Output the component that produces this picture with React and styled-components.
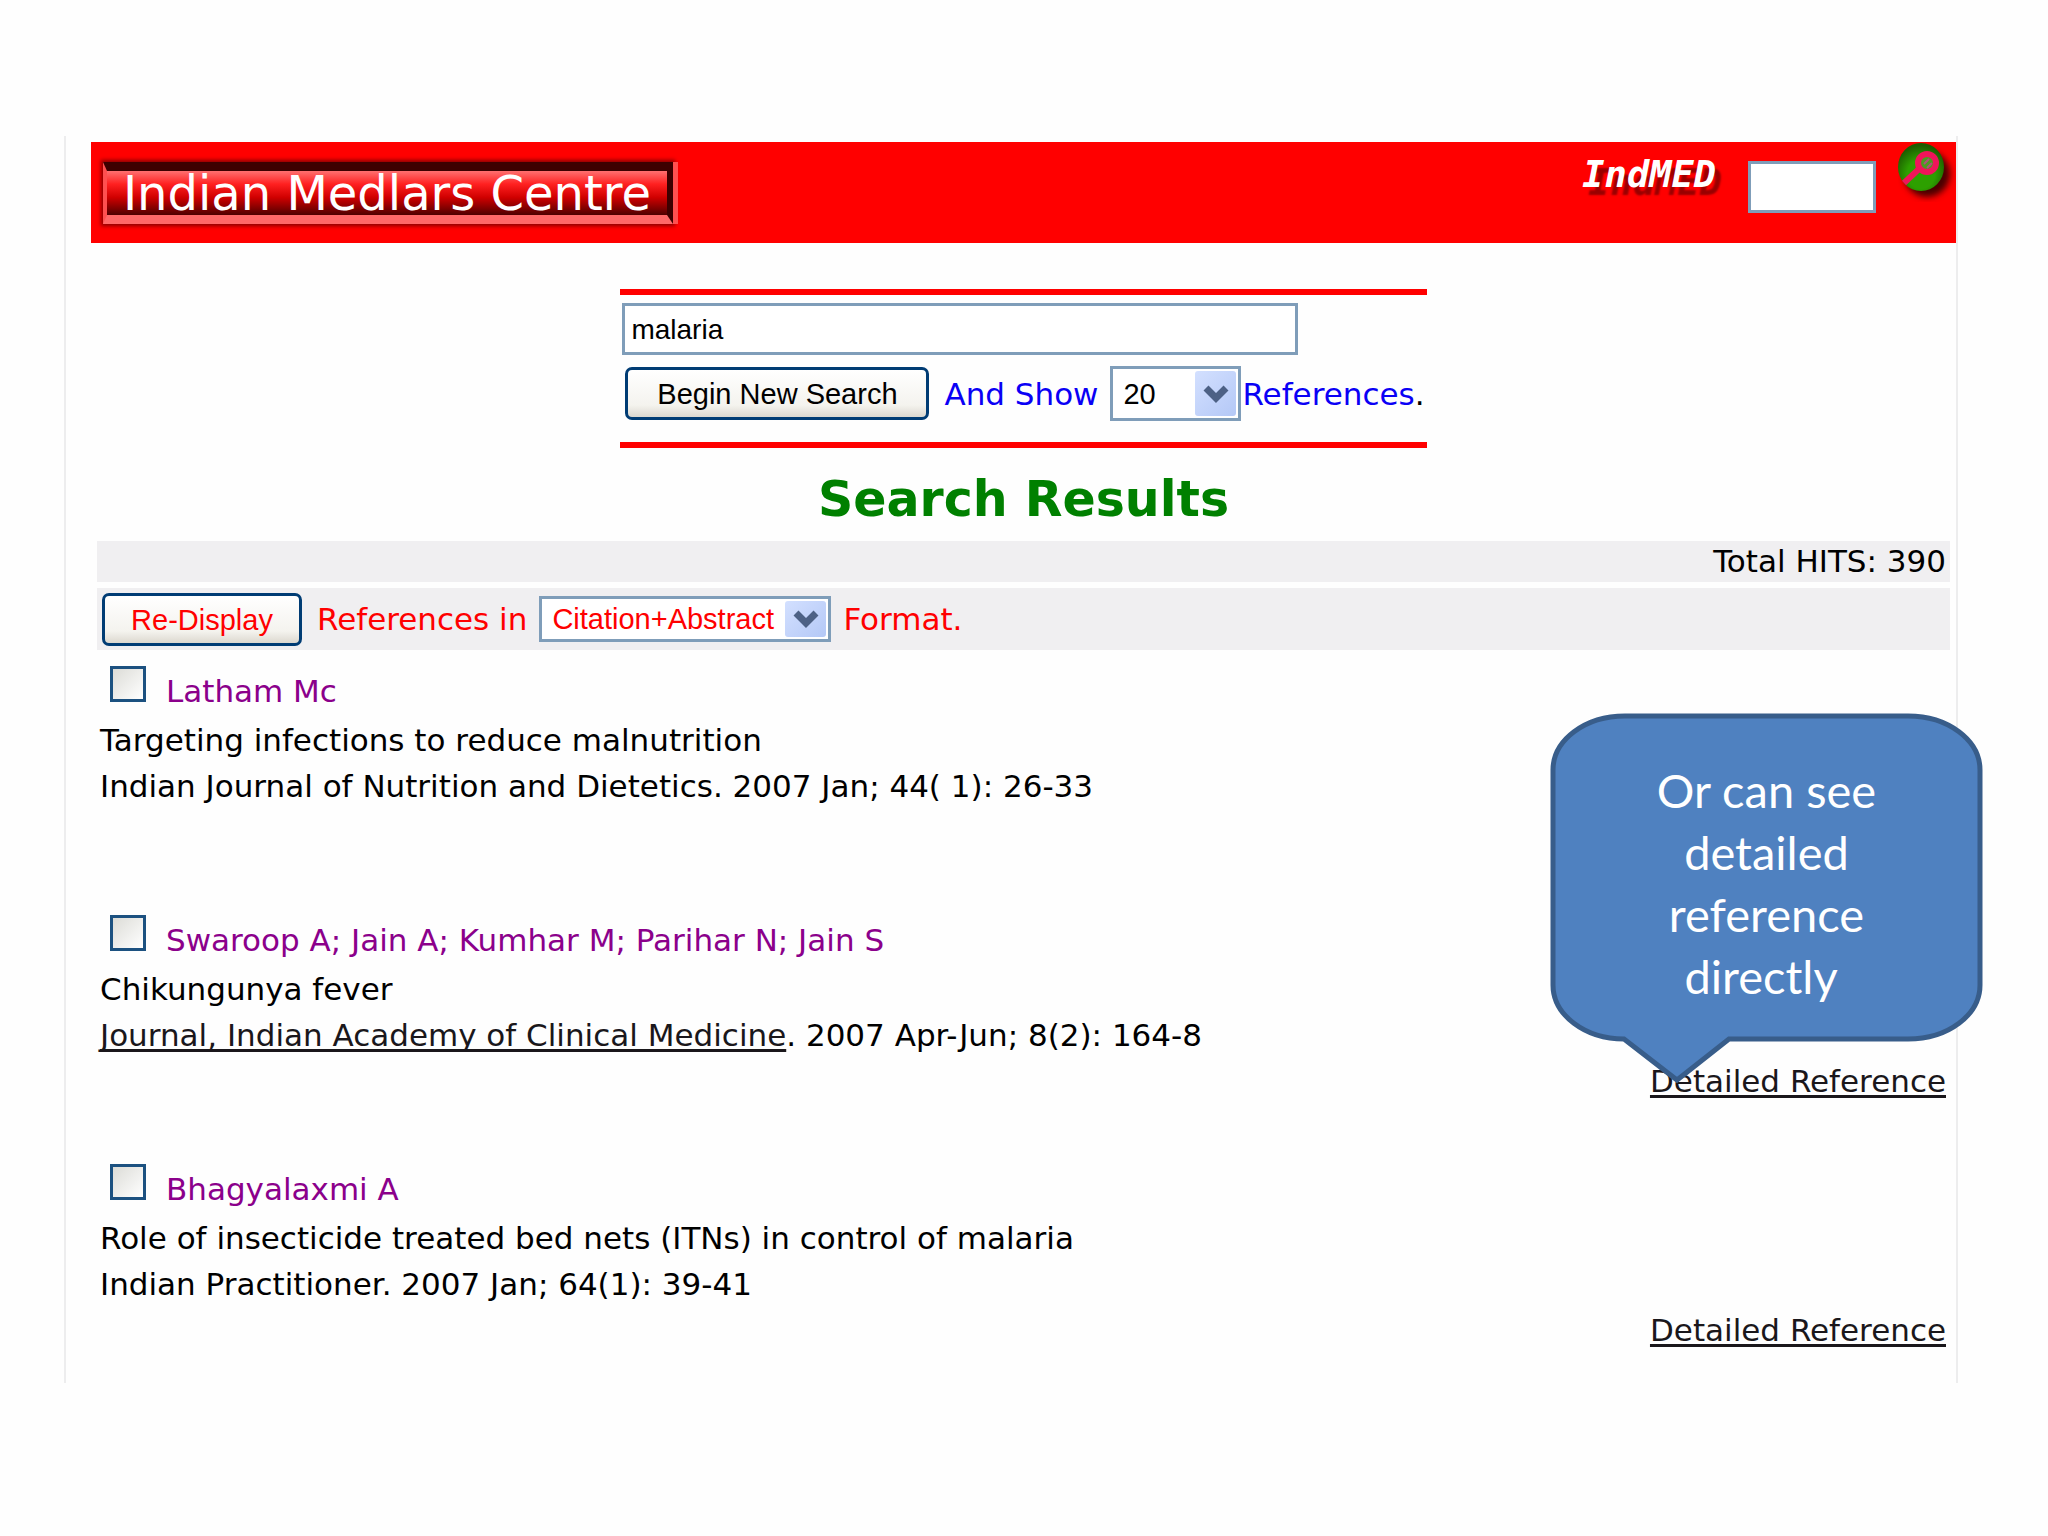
import React from 'react'
import styled, { createGlobalStyle, ThemeProvider } from 'styled-components'

const theme = {
  colors: {
    red: '#ff0000',
    blue: '#0a00f5',
    green: '#008000',
    purple: '#8b008b',
    text: '#000000',
    link: '#1a171b',
    stripe: '#f0eff1',
    fieldBorder: '#7f9db9',
    buttonBorder: '#003c74',
    callout: '#4f81c0',
    calloutBorder: '#385d8a',
  },
  fonts: {
    page: '"DejaVu Sans", Verdana, sans-serif',
    control: '"Liberation Sans", Arial, sans-serif',
    logo: '"DejaVu Sans", Verdana, sans-serif',
    product: '"DejaVu Sans Mono", monospace',
    callout: 'Lato, sans-serif',
  },
}

const GlobalStyle = createGlobalStyle`
  * {
    box-sizing: border-box;
  }
  body {
    margin: 0;
    background: #fefefe;
    color: ${({ theme }) => theme.colors.text};
    font-family: ${({ theme }) => theme.fonts.page};
    font-size: 31px;
    line-height: 46px;
  }
`

const Page = styled.div`
  padding: 136px 90px 152px 64px;
`
const Frame = styled.div`
  border: solid #ededee;
  border-width: 0 2px;
  padding: 6px 0 30px 25px;
`
const Header = styled.header`
  display: flex;
  align-items: flex-start;
  height: 101px;
  background: ${({ theme }) => theme.colors.red};
`
const Logo = styled.h1`
  min-width: 570px;
  margin: 20px auto 0 12px;
  border: solid;
  border-width: 9px 6px 9px 4px;
  border-color: #3d0000 #3d0000 #ff6868 #ff5050;
  background: linear-gradient(#ff7070, #ff2020 30%, #d00000 60%, #500000);
  box-shadow: 5px 0 0 #ff5050, 0 0 4px 2px #8a0000;
  color: #ffffff;
  font-family: ${({ theme }) => theme.fonts.logo};
  font-size: 48px;
  font-weight: 400;
  line-height: 44px;
  text-align: center;
  white-space: nowrap;
`
const Product = styled.label`
  margin-top: 10px;
  color: #ffffff;
  font-family: ${({ theme }) => theme.fonts.product};
  font-size: 37px;
  font-style: italic;
  font-weight: 700;
  text-shadow: 6px 8px 2px #990000;
`
const Field = styled.input`
  height: 52px;
  padding: 2px 6px 0;
  border: 3px solid ${({ theme }) => theme.colors.fieldBorder};
  border-radius: 0;
  background: #ffffff;
  color: ${({ theme }) => theme.colors.text};
  font-family: ${({ theme }) => theme.fonts.control};
  font-size: 28px;
`
const QuickField = styled(Field)`
  width: 128px;
  margin: 19px 22px 0 32px;
`
const IconButton = styled.button`
  display: block;
  width: 58px;
  height: 60px;
  padding: 0;
  border: 0;
  background: none;
`
const SearchPanel = styled.form`
  display: flex;
  flex-direction: column;
  gap: 11px;
  width: fit-content;
  margin: 46px auto 0;
  padding: 8px 2px 21px;
  border: solid ${({ theme }) => theme.colors.red};
  border-width: 6px 0;
`
const QueryField = styled(Field)`
  width: 676px;
`
const Row = styled.div`
  display: flex;
  align-items: center;
`
const Label = styled.label`
  margin: 0 ${({ $right = 0 }) => $right}px 0 ${({ $left = 0 }) => $left}px;
  color: ${({ theme, $color }) => theme.colors[$color]};
  white-space: pre;
`
const Button = styled.button`
  height: 53px;
  min-width: ${({ $width }) => $width}px;
  margin-left: ${({ $left = 0 }) => $left}px;
  padding: 2px 0 0;
  border: 3px solid ${({ theme }) => theme.colors.buttonBorder};
  border-radius: 7px;
  background: linear-gradient(#ffffff, #f4f3ee 75%, #dcd8cf);
  color: ${({ theme, $color }) => theme.colors[$color]};
  font-family: ${({ theme }) => theme.fonts.control};
  font-size: 29px;
`
const SelectBox = styled.span`
  position: relative;
  display: flex;
`
const SelectInput = styled.select`
  appearance: none;
  width: ${({ $width }) => $width}px;
  height: ${({ $height }) => $height}px;
  padding: 0 44px 0 10px;
  border: 3px solid ${({ theme }) => theme.colors.fieldBorder};
  border-radius: 0;
  background: #ffffff;
  color: ${({ theme, $color }) => theme.colors[$color]};
  font-family: ${({ theme }) => theme.fonts.control};
  font-size: 29px;
`
const SelectArrow = styled.span`
  position: absolute;
  top: 5px;
  right: 5px;
  bottom: 5px;
  width: 41px;
  display: flex;
  align-items: center;
  justify-content: center;
  border-radius: 3px;
  background: linear-gradient(135deg, #d3e0ff, #b4c8f6);
  pointer-events: none;
`
const Title = styled.h2`
  margin: 24px 0 13px;
  color: ${({ theme }) => theme.colors.green};
  font-size: 49px;
  font-weight: 700;
  line-height: 56px;
  text-align: center;
`
const Results = styled.main`
  padding: 0 6px;
`
const Hits = styled.div`
  padding-right: 4px;
  background: ${({ theme }) => theme.colors.stripe};
  line-height: 41px;
  text-align: right;
`
const FormatBar = styled.form`
  display: flex;
  align-items: center;
  height: 62px;
  margin: 6px 0 16px;
  background: ${({ theme }) => theme.colors.stripe};
`
const Entry = styled.article`
  position: relative;
  margin-bottom: ${({ $last }) => ($last ? 0 : 60)}px;
  padding: 0 4px 0 3px;
`
const AuthorRow = styled.div`
  display: flex;
  align-items: baseline;
  padding: 0 0 3px 10px;
`
const Checkbox = styled.input`
  appearance: none;
  width: 36px;
  height: 36px;
  margin: 0 20px 0 0;
  border: 3px solid #1c5180;
  background: linear-gradient(135deg, #dcdcd7, #ffffff);
`
const Line = styled.p`
  min-height: 46px;
  margin: 0;
  text-align: ${({ $align = 'left' }) => $align};
`
const Link = styled.a`
  color: ${({ theme }) => theme.colors.link};
  text-decoration-thickness: 3px;
  text-underline-offset: 3px;
  text-decoration-skip-ink: none;
`
const Callout = styled.aside`
  position: absolute;
  right: -33px;
  bottom: 16px;
  width: 433px;
  height: 375px;
  padding-top: 46px;
  color: #ffffff;
  font-family: ${({ theme }) => theme.fonts.callout};
  font-size: 47px;
  line-height: 62px;
  text-align: center;
  white-space: pre-line;
`
const CalloutShape = styled.svg`
  position: absolute;
  top: 0;
  left: 0;
`
const CalloutText = styled.span`
  position: relative;
`

const references = [
  {
    authors: 'Latham Mc',
    title: 'Targeting infections to reduce malnutrition',
    source: 'Indian Journal of Nutrition and Dietetics. 2007 Jan; 44( 1): 26-33',
  },
  {
    authors: 'Swaroop A; Jain A; Kumhar M; Parihar N; Jain S',
    title: 'Chikungunya fever',
    journal: 'Journal, Indian Academy of Clinical Medicine',
    source: '. 2007 Apr-Jun; 8(2): 164-8',
    detailed: true,
    callout: 'Or can see\ndetailed\nreference\ndirectly\u00a0',
  },
  {
    authors: 'Bhagyalaxmi A',
    title: 'Role of insecticide treated bed nets (ITNs) in control of malaria',
    source: 'Indian Practitioner. 2007 Jan; 64(1): 39-41',
    detailed: true,
  },
]

const SearchIcon = () => (
  <svg width='58' height='60' viewBox='0 0 58 60' aria-hidden='true'>
    <defs>
      <filter id='soft' x='-20%' y='-20%' width='140%' height='140%'>
        <feGaussianBlur stdDeviation='3' />
      </filter>
      <radialGradient id='ball' cx='0.5' cy='0.65' r='0.6'>
        <stop offset='0.5' stopColor='#2da000' />
        <stop offset='1' stopColor='#1d5c00' />
      </radialGradient>
    </defs>
    <circle cx='29' cy='32' r='23' fill='#4a0000' filter='url(#soft)' />
    <ellipse cx='23' cy='25' rx='23' ry='24' fill='url(#ball)' />
    <path d='M6 41 22 26' stroke='#f0145a' strokeWidth='6' />
    <circle cx='29' cy='21' r='9' fill='#4c9a20' stroke='#f0145a' strokeWidth='6' />
    <path d='M26 22l5-5M29 26l5-5' stroke='#b0507a' strokeWidth='2' />
  </svg>
)

const Select = ({ id, value, color, width, height }) => (
  <SelectBox>
    <SelectInput id={id} defaultValue={value} $color={color} $width={width} $height={height}>
      <option>{value}</option>
    </SelectInput>
    <SelectArrow>
      <svg width='26' height='20' viewBox='0 0 26 20' aria-hidden='true'>
        <path d='M3 4 13 14 23 4' fill='none' stroke='#4d6185' strokeWidth='7' />
      </svg>
    </SelectArrow>
  </SelectBox>
)

const Reference = ({ item, index, last }) => (
  <Entry $last={last}>
    <AuthorRow>
      <Checkbox type='checkbox' id={`ref-${index}`} />
      <Label htmlFor={`ref-${index}`} $color='purple'>{item.authors}</Label>
    </AuthorRow>
    <Line>{item.title}</Line>
    <Line>
      {item.journal && <Link href='#journal'>{item.journal}</Link>}
      {item.source}
    </Line>
    <Line $align='right'>
      {item.detailed && <Link href='#detailed'>Detailed Reference</Link>}
    </Line>
    {item.callout && (
      <Callout>
        <CalloutShape width='433' height='375' viewBox='0 0 433 375' aria-hidden='true'>
          <path
            d='M3 57C3 27 35 3 75 3H358C398 3 430 27 430 57V272C430 302 398 326 358 326H179L127 367 74 326C35 326 3 302 3 272Z'
            fill={theme.colors.callout}
            stroke={theme.colors.calloutBorder}
            strokeWidth='5'
          />
        </CalloutShape>
        <CalloutText>{item.callout}</CalloutText>
      </Callout>
    )}
  </Entry>
)

const App = () => {
  return (
    <ThemeProvider theme={theme}>
      <GlobalStyle />
      <Page>
        <Frame>
          <Header>
            <Logo>Indian Medlars Centre</Logo>
            <Product htmlFor='quick'>IndMED</Product>
            <QuickField id='quick' type='text' />
            <IconButton type='button' aria-label='Search IndMED'>
              <SearchIcon />
            </IconButton>
          </Header>
          <SearchPanel onSubmit={(e) => e.preventDefault()}>
            <QueryField type='text' aria-label='Search terms' defaultValue='malaria' />
            <Row>
              <Button type='submit' $color='text' $width={304} $left={3}>Begin New Search</Button>
              <Label htmlFor='count' $color='blue' $left={15} $right={12}>And Show</Label>
              <Select id='count' value='20' color='text' width={131} height={55} />
              <Label htmlFor='count' $color='blue' $left={1}>References</Label>
              <span>.</span>
            </Row>
          </SearchPanel>
          <Title>Search Results</Title>
          <Results>
            <Hits>Total HITS: 390</Hits>
            <FormatBar onSubmit={(e) => e.preventDefault()}>
              <Button type='submit' $color='red' $width={200} $left={5}>Re-Display</Button>
              <Label htmlFor='format' $color='red' $left={15} $right={12}>References in</Label>
              <Select id='format' value='Citation+Abstract' color='red' width={292} height={46} />
              <Label htmlFor='format' $color='red' $left={12}>Format.</Label>
            </FormatBar>
            {references.map((item, i) => (
              <Reference key={item.authors} item={item} index={i} last={i === references.length - 1} />
            ))}
          </Results>
        </Frame>
      </Page>
    </ThemeProvider>
  )
}

export default App
